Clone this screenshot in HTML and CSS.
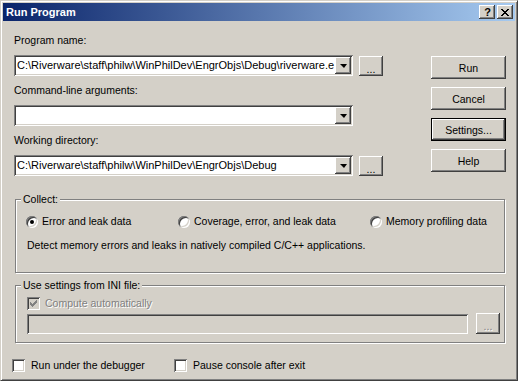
FILE: index.html
```html
<!DOCTYPE html>
<html lang="en">
<head>
    <meta charset="UTF-8">
    <title>Run Program</title>
    <link rel="stylesheet" href="styles.css">
</head>
<body>
    <div class="window">
        <!-- Title bar -->
        <div class="titlebar">
            <span class="title">Run Program</span>
            <div class="title-buttons">
                <span class="tbtn help-btn">?</span>
                <span class="tbtn">
                    <svg width="8" height="7" viewBox="0 0 8 7" shape-rendering="crispEdges">
                        <path d="M0 0h2v1h-2zM6 0h2v1h-2zM1 1h2v1h-2zM5 1h2v1h-2zM2 2h4v1h-4zM3 3h2v1h-2zM2 4h4v1h-4zM1 5h2v1h-2zM5 5h2v1h-2zM0 6h2v1h-2zM6 6h2v1h-2z" fill="#000"/>
                    </svg>
                </span>
            </div>
        </div>

        <div class="content">
            <div class="top">
                <div class="fields">
                    <div class="field-label">Program name:</div>
                    <div class="field-row">
                        <div class="combo">
                            <span class="combo-text">C:\Riverware\staff\philw\WinPhilDev\EngrObjs\Debug\riverware.e</span>
                            <span class="drop"><span class="arrow"></span></span>
                        </div>
                        <button class="btn browse">...</button>
                    </div>

                    <div class="field-label">Command-line arguments:</div>
                    <div class="field-row">
                        <div class="combo">
                            <span class="combo-text"></span>
                            <span class="drop"><span class="arrow"></span></span>
                        </div>
                    </div>

                    <div class="field-label">Working directory:</div>
                    <div class="field-row">
                        <div class="combo">
                            <span class="combo-text">C:\Riverware\staff\philw\WinPhilDev\EngrObjs\Debug</span>
                            <span class="drop"><span class="arrow"></span></span>
                        </div>
                        <button class="btn browse">...</button>
                    </div>
                </div>

                <div class="actions">
                    <button class="btn action">Run</button>
                    <button class="btn action">Cancel</button>
                    <button class="btn action default">Settings...</button>
                    <button class="btn action">Help</button>
                </div>
            </div>

            <!-- Collect -->
            <div class="group collect">
                <span class="group-label">Collect:</span>
                <div class="radio-row">
                    <label class="radio-item first"><span class="radio checked"></span>Error and leak data</label>
                    <label class="radio-item second"><span class="radio"></span>Coverage, error, and leak data</label>
                    <label class="radio-item"><span class="radio"></span>Memory profiling data</label>
                </div>
                <div class="description">Detect memory errors and leaks in natively compiled C/C++ applications.</div>
            </div>

            <!-- INI file -->
            <div class="group ini">
                <span class="group-label">Use settings from INI file:</span>
                <label class="check-item disabled">
                    <span class="checkbox disabled">
                        <svg width="7" height="7" viewBox="0 0 7 7" shape-rendering="crispEdges">
                            <path d="M6 0h1v3h-1zM5 1h1v3h-1zM4 2h1v3h-1zM3 3h1v3h-1zM2 4h1v3h-1zM1 3h1v3h-1zM0 2h1v3h-1z" fill="#808080"/>
                        </svg>
                    </span>
                    Compute automatically
                </label>
                <div class="ini-row">
                    <div class="edit disabled"></div>
                    <button class="btn browse disabled">...</button>
                </div>
            </div>

            <div class="options">
                <label class="check-item first"><span class="checkbox"></span>Run under the debugger</label>
                <label class="check-item"><span class="checkbox"></span>Pause console after exit</label>
            </div>
        </div>
    </div>
</body>
</html>
```

FILE: styles.css
```css
body {
    margin: 0;
    padding: 0;
    font-family: "Liberation Sans", Arial, sans-serif;
    font-size: 10.5px;
    color: #000;
    background-color: #d4d0c8;
}

.window {
    box-sizing: border-box;
    width: 518px;
    height: 381px;
    padding: 2px;
    border: 1px solid;
    border-color: #d4d0c8 #404040 #404040 #d4d0c8;
    box-shadow: inset 1px 1px #fff, inset -1px -1px #808080;
    background-color: #d4d0c8;
}

/* Title bar */

.titlebar {
    display: flex;
    align-items: center;
    justify-content: space-between;
    height: 18px;
    padding: 0 2px 0 3px;
    background: linear-gradient(to right, #0a246a, #a6caf0);
}

.title {
    color: #fff;
    font-weight: bold;
    font-size: 11px;
    line-height: 13px;
}

.title-buttons {
    display: flex;
    gap: 2px;
}

.tbtn {
    box-sizing: border-box;
    display: flex;
    align-items: center;
    justify-content: center;
    width: 16px;
    height: 14px;
    background-color: #d4d0c8;
    box-shadow: inset -1px -1px #404040, inset 1px 1px #fff, inset -2px -2px #808080, inset 2px 2px #d4d0c8;
}

.help-btn {
    font-weight: bold;
    font-size: 11px;
    line-height: 14px;
    padding-left: 1px;
}

/* Common controls */

.btn {
    box-sizing: border-box;
    margin: 0;
    padding: 0;
    border: none;
    background-color: #d4d0c8;
    font-family: inherit;
    font-size: 10.5px;
    color: #000;
    box-shadow: inset -1px -1px #404040, inset 1px 1px #fff, inset -2px -2px #808080, inset 2px 2px #d4d0c8;
}

.btn.default {
    border: 1px solid #000;
}

.btn.disabled {
    color: #808080;
    text-shadow: 1px 1px 0 #fff;
}

.content {
    padding: 13px 8px 0 11px;
}

.top {
    display: flex;
    gap: 48px;
}

.fields {
    width: 369px;
}

.field-label {
    height: 13px;
    line-height: 13px;
    margin-bottom: 8px;
}

.field-row {
    display: flex;
    align-items: center;
    gap: 6px;
    height: 21px;
    margin-bottom: 8px;
}

.combo {
    box-sizing: border-box;
    display: flex;
    width: 339px;
    height: 21px;
    padding: 2px;
    background-color: #fff;
    box-shadow: inset 1px 1px #808080, inset -1px -1px #fff, inset 2px 2px #404040, inset -2px -2px #d4d0c8;
}

.combo-text {
    flex: 1;
    overflow: hidden;
    white-space: nowrap;
    padding-left: 1px;
    font-size: 11px;
    line-height: 17px;
}

.drop {
    box-sizing: border-box;
    display: flex;
    align-items: center;
    justify-content: center;
    width: 16px;
    height: 17px;
    background-color: #d4d0c8;
    box-shadow: inset -1px -1px #404040, inset 1px 1px #fff, inset -2px -2px #808080, inset 2px 2px #d4d0c8;
}

.arrow {
    width: 0;
    height: 0;
    border-left: 4px solid transparent;
    border-right: 3px solid transparent;
    border-top: 4px solid #000;
    margin-top: 1px;
}

.browse {
    width: 24px;
    height: 20px;
    line-height: 20px;
    padding-top: 3px;
}

.actions {
    display: flex;
    flex-direction: column;
    gap: 8px;
    margin-top: 22px;
}

.action {
    width: 75px;
    height: 23px;
}

/* Group boxes */

.group {
    position: relative;
    box-sizing: border-box;
    width: 490px;
    margin-left: 1px;
    border: 1px solid #808080;
    box-shadow: 1px 1px 0 #fff, inset 1px 1px 0 #fff;
}

.group-label {
    position: absolute;
    top: -7px;
    left: 5px;
    padding: 0 2px;
    line-height: 13px;
    background-color: #d4d0c8;
}

.collect {
    height: 74px;
    margin-top: 15px;
    padding: 15px 0 0 10px;
}

.radio-row {
    display: flex;
    height: 13px;
}

.radio-item {
    display: flex;
    align-items: center;
    gap: 4px;
    line-height: 13px;
}

.radio-item.first {
    width: 152px;
}

.radio-item.second {
    width: 192px;
}

.radio {
    position: relative;
    box-sizing: border-box;
    width: 12px;
    height: 12px;
    border-radius: 50%;
    background-color: #fff;
    box-shadow: inset 1px 1px #808080, inset -1px -1px #fff, inset 2px 2px #404040, inset -2px -2px #d4d0c8;
}

.radio.checked::after {
    content: "";
    position: absolute;
    left: 4px;
    top: 4px;
    width: 4px;
    height: 4px;
    border-radius: 50%;
    background-color: #000;
}

.description {
    margin-top: 11px;
    padding-left: 1px;
    line-height: 13px;
}

.ini {
    height: 58px;
    margin-top: 12px;
    padding: 11px 0 0 11px;
}

.check-item {
    display: flex;
    align-items: center;
    gap: 6px;
    line-height: 13px;
}

.check-item.disabled {
    gap: 5px;
    color: #808080;
    text-shadow: 1px 1px 0 #fff;
}

.checkbox {
    box-sizing: border-box;
    display: flex;
    align-items: center;
    justify-content: center;
    width: 13px;
    height: 13px;
    background-color: #fff;
    box-shadow: inset 1px 1px #808080, inset -1px -1px #fff, inset 2px 2px #404040, inset -2px -2px #d4d0c8;
}

.checkbox.disabled {
    background-color: #d4d0c8;
}

.ini-row {
    display: flex;
    align-items: flex-end;
    gap: 8px;
    margin-top: 3px;
}

.edit {
    box-sizing: border-box;
    width: 441px;
    height: 20px;
    box-shadow: inset 1px 1px #808080, inset -1px -1px #fff, inset 2px 2px #404040, inset -2px -2px #d4d0c8;
}

.ini-row .browse {
    height: 21px;
}

.options {
    display: flex;
    margin: 16px 0 0 -2px;
}

.options .check-item.first {
    width: 162px;
}
```
